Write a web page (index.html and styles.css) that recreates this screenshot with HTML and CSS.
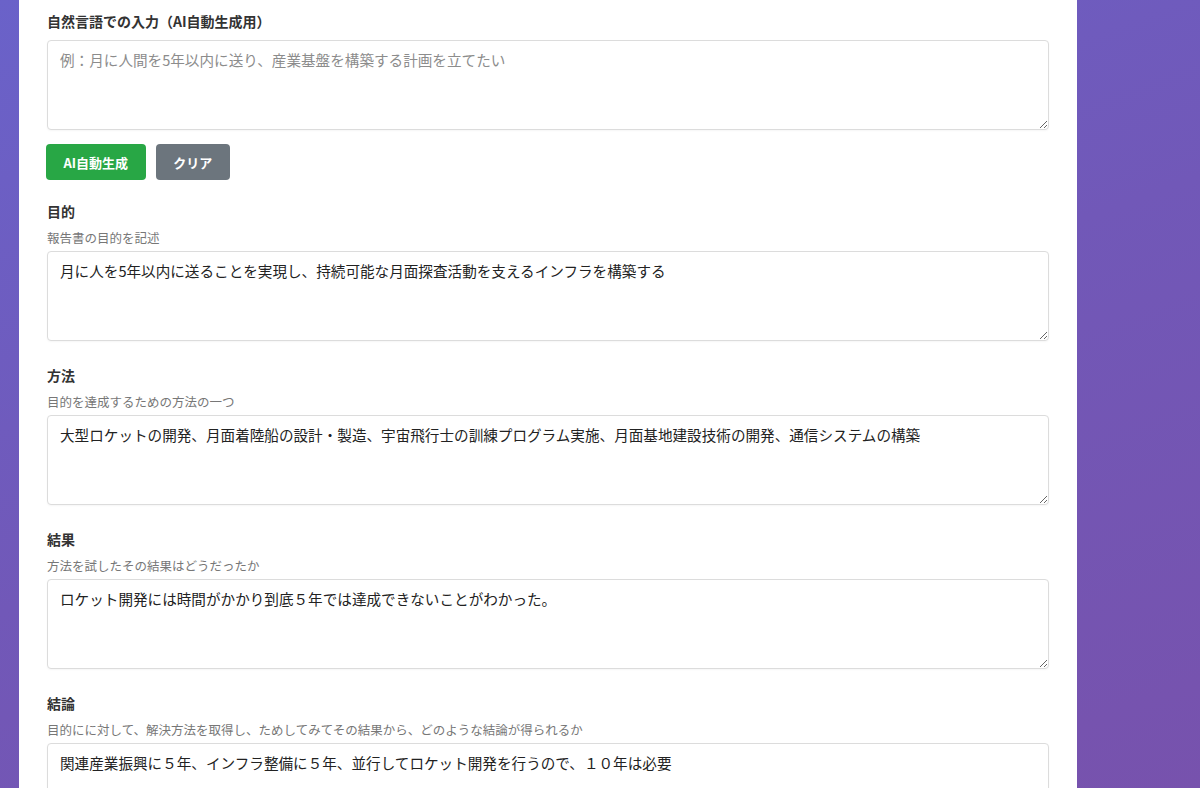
FILE: index.html
```html
<!DOCTYPE html>
<html lang="ja">
<head>
    <title>報告書作成</title>
    <meta charset="UTF-8">
    <link rel="stylesheet" href="styles.css">
</head>
<body>
<div class="container">
    <div class="form-group">
        <label class="field-label" for="prompt">自然言語での入力（AI自動生成用）</label>
        <textarea id="prompt" placeholder="例：月に人間を5年以内に送り、産業基盤を構築する計画を立てたい"></textarea>
        <div class="button-row">
            <button class="btn btn-generate">AI自動生成</button>
            <button class="btn btn-clear">クリア</button>
        </div>
    </div>

    <div class="form-group">
        <label class="field-label" for="purpose">目的</label>
        <div class="field-desc">報告書の目的を記述</div>
        <textarea id="purpose">月に人を5年以内に送ることを実現し、持続可能な月面探査活動を支えるインフラを構築する</textarea>
    </div>

    <div class="form-group">
        <label class="field-label" for="method">方法</label>
        <div class="field-desc">目的を達成するための方法の一つ</div>
        <textarea id="method">大型ロケットの開発、月面着陸船の設計・製造、宇宙飛行士の訓練プログラム実施、月面基地建設技術の開発、通信システムの構築</textarea>
    </div>

    <div class="form-group">
        <label class="field-label" for="result">結果</label>
        <div class="field-desc">方法を試したその結果はどうだったか</div>
        <textarea id="result">ロケット開発には時間がかかり到底５年では達成できないことがわかった。</textarea>
    </div>

    <div class="form-group">
        <label class="field-label" for="conclusion">結論</label>
        <div class="field-desc">目的にに対して、解決方法を取得し、ためしてみてその結果から、どのような結論が得られるか</div>
        <textarea id="conclusion">関連産業振興に５年、インフラ整備に５年、並行してロケット開発を行うので、１０年は必要</textarea>
    </div>
</div>
</body>
</html>
```

FILE: styles.css
```css
html, body {
    height: 100%;
}

body {
    margin: 0;
    font-family: "Noto Sans CJK JP", "Noto Sans", sans-serif;
    background: linear-gradient(160deg, #6a62c9 0%, #7158b8 50%, #7752ad 100%);
    color: #333;
    overflow: hidden;
}

.container {
    background: #fff;
    width: 1058px;
    margin-left: 19px;
    padding: 11px 28px 40px;
    box-sizing: border-box;
    min-height: 100%;
}

.form-group {
    margin-bottom: 24px;
}

.field-label {
    display: block;
    font-size: 14px;
    font-weight: bold;
    line-height: 21px;
    margin-bottom: 8px;
    color: #333;
}

.field-desc {
    font-size: 12.5px;
    line-height: 16px;
    color: #777;
    margin-bottom: 5px;
}

textarea {
    display: block;
    width: 100%;
    height: 90px;
    box-sizing: border-box;
    padding: 8px 12px;
    border: 1px solid #dcdcdc;
    border-radius: 4px;
    font-family: inherit;
    font-size: 14.6px;
    line-height: 22px;
    color: #222;
    background: #fff;
    resize: vertical;
    box-shadow: 0 1px 2px rgba(0, 0, 0, 0.04);
}

textarea::placeholder {
    color: #8c8c8c;
}

.button-row {
    display: flex;
    gap: 10px;
    margin-top: 14px;
    margin-bottom: -3px;
}

.btn {
    height: 36px;
    padding: 0 17.5px;
    border: none;
    border-radius: 4px;
    font-family: inherit;
    font-size: 13px;
    font-weight: bold;
    color: #fff;
    cursor: pointer;
}

.btn-generate {
    background: #28a745;
    margin-left: -1px;
}

.btn-clear {
    background: #6c757d;
}
```
